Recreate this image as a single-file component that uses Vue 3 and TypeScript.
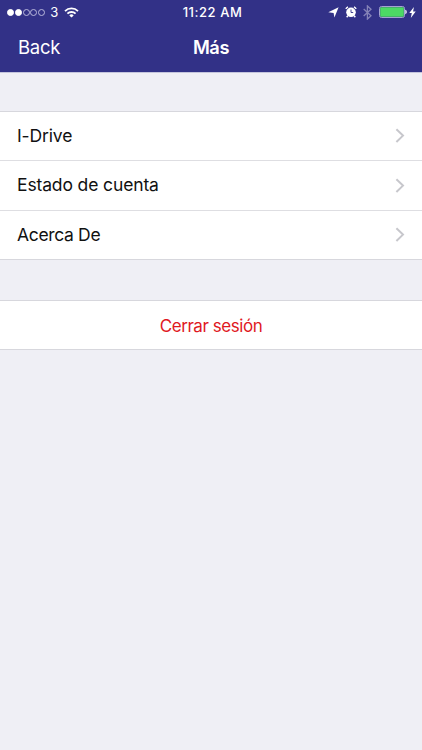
<script setup lang="ts">
interface MenuItem {
  id: string
  label: string
}

const carrier = '3'
const time = '11:22 AM'
const signalDots: boolean[] = [true, true, false, false, false]

const items: MenuItem[] = [
  { id: 'drive', label: 'I-Drive' },
  { id: 'account', label: 'Estado de cuenta' },
  { id: 'about', label: 'Acerca De' },
]
</script>

<template>
  <main class="screen">
    <header class="header">
      <div class="status">
        <div class="status-left">
          <span class="dots">
            <i v-for="(on, i) in signalDots" :key="i" class="dot" :class="{ on }"></i>
          </span>
          <span class="carrier">{{ carrier }}</span>
          <svg class="wifi" width="15" height="11" viewBox="0 0 15 11" fill="none" stroke="#fff" stroke-width="1.8">
            <path d="M1 4.1a9.2 9.2 0 0 1 13 0" />
            <path d="M3.4 6.7a5.8 5.8 0 0 1 8.2 0" />
            <path d="M7.5 10.6 5.3 8.4a3.1 3.1 0 0 1 4.4 0z" fill="#fff" stroke="none" />
          </svg>
        </div>
        <span class="time">{{ time }}</span>
        <div class="status-right">
          <svg width="11" height="11" viewBox="0 0 11 11" fill="#fff">
            <path d="M10.6.3 6.4 10.6 5.6 5.9.3 5.2z" />
          </svg>
          <svg class="alarm" width="12" height="12" viewBox="0 0 12 12" fill="none">
            <circle cx="6" cy="6.3" r="4.8" fill="#fff" />
            <path d="M.8 2.9A8 8 0 0 1 3 .9M9 .9a8 8 0 0 1 2.2 2M2.8 9.8l-1.1 1.4M9.2 9.8l1.1 1.4" stroke="#fff" stroke-width="1.4" />
            <path d="M6 3.5v3h2.2" stroke="#323187" stroke-width="0.9" />
          </svg>
          <svg class="bluetooth" width="9" height="15" viewBox="0 0 9 15" fill="none" stroke="#8583b8" stroke-width="1.3">
            <path d="m.7 4.1 7.3 6.7-3.6 3.3V.9L8 4.2.7 10.9" />
          </svg>
          <svg class="battery" width="28" height="12" viewBox="0 0 28 12">
            <rect x=".5" y=".5" width="25" height="11" rx="2" fill="none" stroke="#a5a4d0" />
            <rect x="1.2" y="1.2" width="23.6" height="9.6" rx="1" fill="#4cd964" />
            <path d="M26.3 3.8c1.9.6 1.9 3.8 0 4.4z" fill="#fff" />
          </svg>
          <svg class="bolt" width="7" height="11" viewBox="0 0 7 11" fill="#fff">
            <path d="M4.9 0 .3 6.1h2.5L1.8 11l4.9-6.4H4.1z" />
          </svg>
        </div>
      </div>
      <nav class="navbar">
        <a class="back">Back</a>
        <h1 class="title">Más</h1>
      </nav>
    </header>

    <ul class="group">
      <li v-for="item in items" :key="item.id" class="row">
        <span :class="['label', item.id]">{{ item.label }}</span>
        <svg class="chevron" width="10" height="16" viewBox="0 0 10 16" fill="none" stroke="#c7c7cc" stroke-width="2">
          <path d="m1.4 1.2 6.6 6.4L1.4 14" />
        </svg>
      </li>
    </ul>

    <section class="group logout">
      <button class="logout-button" type="button">Cerrar sesión</button>
    </section>
  </main>
</template>

<style>
body {
  background: #efeff5;
}
</style>

<style scoped>
.screen {
  box-sizing: border-box;
  width: 100%;
  height: 750px;
  overflow: hidden;
  background: #efeff5;
  font-family: Inter, 'Liberation Sans', sans-serif;
  color: #111;
}

.header {
  height: 72px;
  border-bottom: 1px solid #c5c5dc;
  background: #323187;
  background-clip: padding-box;
  color: #fff;
}

.status {
  display: grid;
  grid-template-columns: 1fr auto 1fr;
  align-items: center;
  height: 24px;
  padding: 0 6px 0 7px;
}

.status-left,
.status-right,
.dots {
  display: flex;
  align-items: center;
}

.status-right {
  justify-content: flex-end;
}

.dots {
  gap: 0.8px;
}

.dot {
  box-sizing: border-box;
  width: 7px;
  height: 7px;
  border: 1px solid #b9b8dc;
  border-radius: 50%;
}

.dot.on {
  border-color: #fff;
  background: #fff;
}

.carrier {
  margin-left: 5px;
  font-size: 13px;
  line-height: 24px;
}

.wifi {
  margin-left: 6px;
}

.time {
  padding-left: 2px;
  font-size: 13px;
  font-weight: 500;
  line-height: 24px;
  letter-spacing: 0.55px;
}

.alarm {
  margin-left: 6px;
}

.bluetooth {
  margin-left: 6px;
}

.battery {
  margin-left: 7px;
}

.bolt {
  margin-left: 2px;
}

.navbar {
  display: grid;
  grid-template-columns: 1fr auto 1fr;
  align-items: center;
  height: 46px;
}

.back {
  padding-left: 18px;
  font-size: 18.5px;
  letter-spacing: -0.25px;
}

.title {
  margin: 0;
  font-size: 18.3px;
  font-weight: 600;
  letter-spacing: -0.4px;
}

.group {
  margin: 38px 0 0;
  padding: 0;
  border-top: 1px solid #d7d7dd;
  border-bottom: 1px solid #d7d7dd;
  background: #fff;
  list-style: none;
}

.row {
  display: flex;
  align-items: center;
  justify-content: space-between;
  height: 48px;
  padding: 0 17px;
}

.row + .row {
  border-top: 1px solid #dedee2;
}

.row:nth-child(2) {
  height: 49px;
}

.label {
  padding-bottom: 2px;
  font-size: 17.5px;
  letter-spacing: -0.13px;
}

.label.about {
  letter-spacing: -0.34px;
}

.logout {
  margin-top: 40px;
}

.logout-button {
  display: block;
  width: 100%;
  height: 48px;
  padding: 1px 0 0;
  border: 0;
  background: transparent;
  color: #e0191f;
  font: inherit;
  font-size: 17px;
  letter-spacing: -0.45px;
}
</style>
